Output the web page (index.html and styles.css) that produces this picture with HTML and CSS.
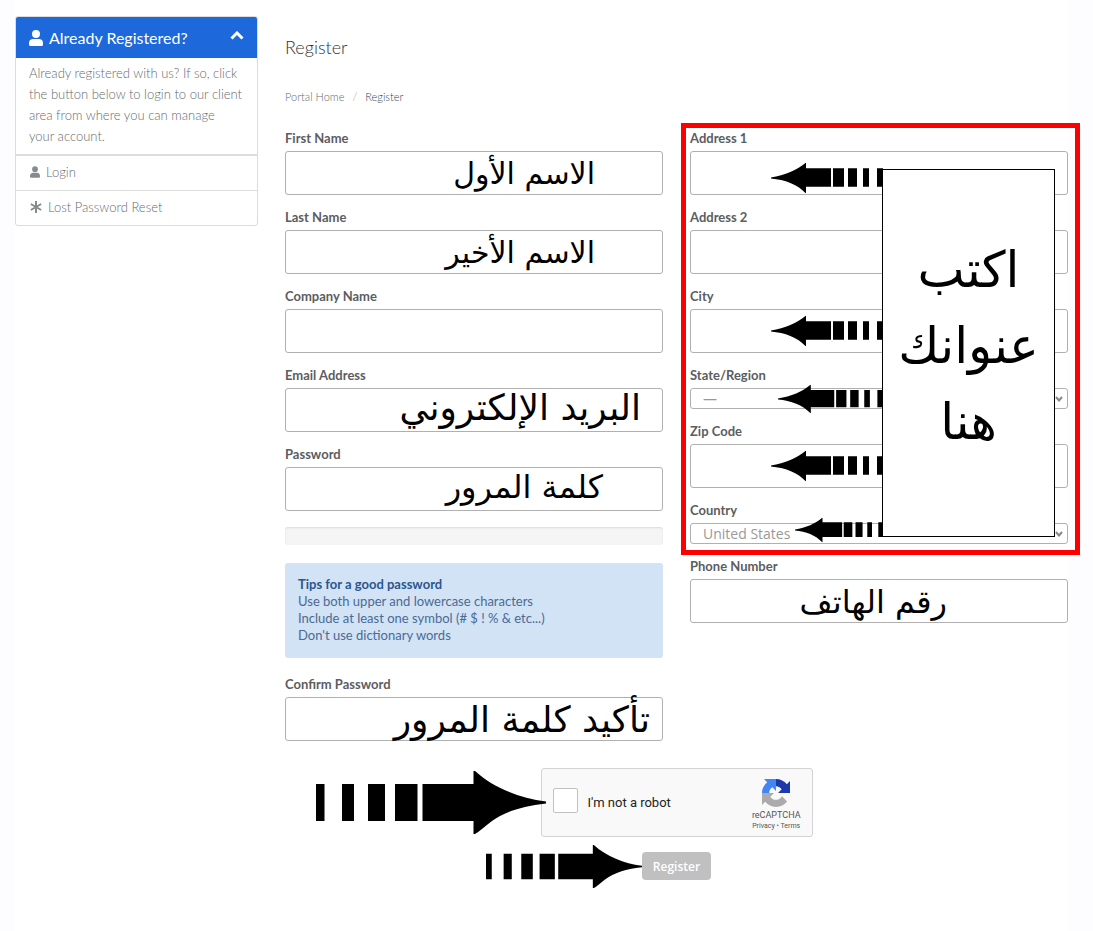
FILE: index.html
```html
<!DOCTYPE html>
<html lang="en">
<head>
    <meta charset="UTF-8">
    <meta name="viewport" content="width=device-width, initial-scale=1.0">
    <title>Register</title>
    <link rel="stylesheet" href="styles.css">
</head>
<body>
    <!-- Shared shapes -->
    <svg class="defs" aria-hidden="true">
        <symbol id="arrow-left" viewBox="0 0 112 32" preserveAspectRatio="none">
            <path d="M0 15.500C14 13 26 8 35 0V6H60V25H35V32C26 22 14 18 0 16.500Z"/>
            <path d="M62 6H73V25H62ZM77 6H86V25H77ZM92 6H98V25H92ZM106 6H112V25H106Z"/>
        </symbol>
        <symbol id="arrow-right" viewBox="0 0 230 63" preserveAspectRatio="none">
            <path d="M0 13H8.500V50H0ZM26 13H38V50H26ZM52 13H69V50H52ZM79 13H101.500V50H79Z"/>
            <path d="M106.500 13H157.500V0H159C178 17 203 27 230 30.500V32.500C205 35 187 42 176 50C168 56 163 61 159 63H157.500V50H106.500Z"/>
        </symbol>
        <symbol id="user" viewBox="0 0 14 16">
            <circle cx="7" cy="4" r="4"/>
            <path d="M3.500 9H10.500Q14 9.500 14 13V14.500Q14 16 12.500 16H1.500Q0 16 0 14.500V13Q0 9.500 3.500 9Z"/>
        </symbol>
    </svg>

    <div class="page">
        <aside class="sidebar">
            <div class="panel">
                <h2 class="panel-heading">
                    <svg class="icon-user"><use href="#user"/></svg>
                    Already Registered?
                    <svg class="icon-chevron" viewBox="0 0 14 9"><path d="M1.500 7.500L7 2L12.500 7.500"/></svg>
                </h2>
                <p class="panel-body">Already registered with us? If so, click the button below to login to our client area from where you can manage<br>your account.</p>
                <a class="panel-link" href="#">
                    <svg class="icon-small"><use href="#user"/></svg>
                    Login
                </a>
                <a class="panel-link" href="#">
                    <svg class="icon-star" viewBox="0 0 12 12"><path d="M6 0V12M.8 3L11.200 9M11.200 3L.8 9"/></svg>
                    Lost Password Reset
                </a>
            </div>
        </aside>

        <main class="main">
            <h1>Register</h1>
            <nav class="breadcrumb">
                <a href="#">Portal Home</a>
                <span class="separator">/</span>
                <span class="current">Register</span>
            </nav>

            <form>
                <div class="columns">
                    <div class="column">
                        <div class="field">
                            <label for="firstname">First Name</label>
                            <div class="control">
                                <input type="text" id="firstname">
                                <span class="hint hint-first" lang="ar" dir="rtl">الاسم الأول</span>
                            </div>
                        </div>
                        <div class="field">
                            <label for="lastname">Last Name</label>
                            <div class="control">
                                <input type="text" id="lastname">
                                <span class="hint hint-last" lang="ar" dir="rtl">الاسم الأخير</span>
                            </div>
                        </div>
                        <div class="field">
                            <label for="company">Company Name</label>
                            <div class="control">
                                <input type="text" id="company">
                            </div>
                        </div>
                        <div class="field">
                            <label for="email">Email Address</label>
                            <div class="control">
                                <input type="email" id="email">
                                <span class="hint hint-email" lang="ar" dir="rtl">البريد الإلكتروني</span>
                            </div>
                        </div>
                        <div class="field">
                            <label for="password">Password</label>
                            <div class="control">
                                <input type="password" id="password">
                                <span class="hint hint-password" lang="ar" dir="rtl">كلمة المرور</span>
                            </div>
                        </div>
                        <div class="strength"></div>
                        <div class="tips">
                            <strong>Tips for a good password</strong><br>
                            Use both upper and lowercase characters<br>
                            Include at least one symbol (# $ ! % &amp; etc...)<br>
                            Don't use dictionary words
                        </div>
                        <div class="field">
                            <label for="confirm">Confirm Password</label>
                            <div class="control">
                                <input type="password" id="confirm">
                                <span class="hint hint-confirm" lang="ar" dir="rtl">تأكيد كلمة المرور</span>
                            </div>
                        </div>
                    </div>

                    <div class="column">
                        <div class="address">
                            <div class="field">
                                <label for="address1">Address 1</label>
                                <div class="control">
                                    <input type="text" id="address1">
                                    <svg class="arrow arrow-low"><use href="#arrow-left"/></svg>
                                </div>
                            </div>
                            <div class="field">
                                <label for="address2">Address 2</label>
                                <div class="control">
                                    <input type="text" id="address2">
                                </div>
                            </div>
                            <div class="field">
                                <label for="city">City</label>
                                <div class="control">
                                    <input type="text" id="city">
                                    <svg class="arrow"><use href="#arrow-left"/></svg>
                                </div>
                            </div>
                            <div class="field">
                                <label for="state">State/Region</label>
                                <div class="control">
                                    <select id="state"><option>—</option></select>
                                    <svg class="chevron" viewBox="0 0 8 6"><path d="M1 1L4 4.500L7 1"/></svg>
                                    <svg class="arrow arrow-medium"><use href="#arrow-left"/></svg>
                                </div>
                            </div>
                            <div class="field">
                                <label for="zip">Zip Code</label>
                                <div class="control">
                                    <input type="text" id="zip">
                                    <svg class="arrow"><use href="#arrow-left"/></svg>
                                </div>
                            </div>
                            <div class="field">
                                <label for="country">Country</label>
                                <div class="control">
                                    <select id="country"><option>United States</option></select>
                                    <svg class="chevron" viewBox="0 0 8 6"><path d="M1 1L4 4.500L7 1"/></svg>
                                    <svg class="arrow arrow-small"><use href="#arrow-left"/></svg>
                                </div>
                            </div>
                            <div class="note" lang="ar" dir="rtl">اكتب<br>عنوانك<br>هنا</div>
                        </div>
                        <div class="field">
                            <label for="phone">Phone Number</label>
                            <div class="control">
                                <input type="tel" id="phone">
                                <span class="hint hint-phone" lang="ar" dir="rtl">رقم الهاتف</span>
                            </div>
                        </div>
                    </div>
                </div>

                <div class="captcha">
                    <input type="checkbox" id="robot">
                    <label for="robot">I'm not a robot</label>
                    <div class="captcha-brand">
                        <svg viewBox="0 0 64 64">
                            <path fill="#1c3aa9" d="M64 32V4.700L56.800 11.800C51 4.700 42 .1 32 .1V16.400C38 16.600 42.500 19.500 45 23.600L36.700 32Z"/>
                            <path fill="#4285f4" d="M32 .1H4.600L11.800 7.300C4.600 13.100 0 22 0 32H16.300C16.500 26.500 19.500 21.700 23.500 19.100L31.900 27.400Z"/>
                            <path fill="#ababab" d="M0 32V59.300L7.200 52.200C13 59.300 22 63.900 32 63.900C42.400 63.900 51.600 59 57.400 51.300L45.700 39.400C44.600 41.600 42.900 43.400 41 44.700C38.900 46.300 36 47.600 32 47.600C26 47.400 21.500 44.400 19 40.300L27.300 32Z"/>
                        </svg>
                        <div class="captcha-name">reCAPTCHA</div>
                        <div class="captcha-links"><a href="#">Privacy</a> • <a href="#">Terms</a></div>
                    </div>
                    <svg class="pointer pointer-large"><use href="#arrow-right"/></svg>
                </div>

                <div class="submit">
                    <button type="submit">Register</button>
                    <svg class="pointer"><use href="#arrow-right"/></svg>
                </div>
            </form>
        </main>
    </div>
</body>
</html>
```

FILE: styles.css
```css
/* General Styles */
* {
    box-sizing: border-box;
}

body {
    margin: 0;
    font-family: Lato, "Open Sans", sans-serif;
    font-size: 13px;
    color: #666c70;
    background: #fdfdff;
}

a {
    color: inherit;
    text-decoration: none;
}

.defs {
    position: absolute;
    width: 0;
    height: 0;
}

.page {
    display: flex;
    gap: 27px;
    min-height: 100vh;
    margin: 0 25px 0 15px;
    padding-top: 16px;
    padding-bottom: 50px;
    background: #fff;
}

/* Sidebar */
.sidebar {
    flex: 0 0 243px;
}

.panel {
    border: 1px solid #dcdcdc;
    border-radius: 3px;
    overflow: hidden;
}

.panel-heading {
    display: flex;
    align-items: center;
    gap: 6px;
    height: 41px;
    margin: 0;
    padding: 0 13px;
    font-size: 16px;
    font-weight: 400;
    color: #fff;
    background: #1d68db;
}

.icon-user {
    width: 14px;
    height: 16px;
    fill: #fff;
}

.icon-chevron {
    width: 14px;
    height: 9px;
    margin-left: auto;
    margin-bottom: 4px;
    fill: none;
    stroke: #fff;
    stroke-width: 3;
}

.panel-body {
    margin: 0;
    padding: 5px 13px 7px;
    line-height: 21px;
    font-weight: 300;
    border-bottom: 1px solid #dcdcdc;
}

.panel-link {
    display: flex;
    align-items: center;
    gap: 6px;
    height: 35px;
    padding: 0 14px 2px;
    font-weight: 300;
    border-top: 1px solid #dcdcdc;
}

.icon-small {
    width: 10px;
    height: 12px;
    fill: #858b8e;
}

.icon-star {
    width: 12px;
    height: 12px;
    stroke: #858b8e;
    stroke-width: 2;
}

/* Main column */
.main {
    flex: 1;
    min-width: 0;
}

h1 {
    margin: 19px 0 0;
    font-size: 18px;
    line-height: 24px;
    font-weight: 300;
    color: #333;
}

.breadcrumb {
    display: flex;
    gap: 8px;
    margin-top: 28px;
    margin-bottom: 21px;
    font-size: 11px;
    line-height: 20px;
    font-weight: 300;
}

.separator {
    color: #999;
}

.current {
    color: #343f58;
}

.columns {
    display: grid;
    grid-template-columns: 1fr 1fr;
    gap: 27px;
}

.field {
    margin-bottom: 12px;
}

.field label {
    display: block;
    margin-bottom: 3px;
    line-height: 20px;
    font-weight: 700;
    color: #5c5d5f;
}

.control {
    position: relative;
}

.control input,
.control select {
    display: block;
    width: 100%;
    height: 44px;
    padding: 0 12px;
    border: 1px solid #b0b0b0;
    border-radius: 3px;
    background: #fff;
    font-family: "Open Sans", sans-serif;
    font-size: 14px;
    color: #999;
}

.control select {
    height: 21px;
    appearance: none;
    line-height: 19px;
}

.chevron {
    position: absolute;
    top: 8px;
    right: 5px;
    width: 8px;
    height: 6px;
    fill: none;
    stroke: #888;
    stroke-width: 2;
}

.strength {
    height: 18px;
    margin: 16px 0 18px;
    background: #f5f5f5;
    border-radius: 3px;
    box-shadow: inset 0 1px 2px rgba(0, 0, 0, 0.1);
}

.tips {
    margin-bottom: 16px;
    padding: 13px 13px 14px;
    line-height: 17px;
    color: #4b6a97;
    background: #d1e3f4;
    border-radius: 3px;
}

.tips strong {
    color: #2c5690;
}

/* Arabic notes written over the form */
.hint,
.note {
    font-family: "DejaVu Sans", sans-serif;
    color: #000;
    white-space: nowrap;
}

.hint {
    position: absolute;
    top: 3px;
    font-size: 32px;
    line-height: 40px;
    pointer-events: none;
}

.hint-first,
.hint-last {
    right: 68px;
    font-size: 30px;
}

.hint-email {
    top: 0;
    right: 22px;
    font-size: 36px;
}

.hint-password {
    top: 0;
    right: 60px;
}

.hint-confirm {
    right: 13px;
    font-size: 36px;
}

.hint-phone {
    right: 121px;
}

.address {
    position: relative;
}

.address::after {
    content: "";
    position: absolute;
    top: -5px;
    right: -12px;
    bottom: -11px;
    left: -9px;
    border: 5px solid #f00;
    pointer-events: none;
}

.note {
    position: absolute;
    top: 41px;
    right: 13px;
    width: 173px;
    height: 368px;
    padding-top: 62px;
    border: 1px solid #000;
    background: #fff;
    font-size: 50px;
    line-height: 76px;
    text-align: center;
}

.arrow {
    position: absolute;
    top: 50%;
    right: 185px;
    width: 112px;
    height: 31px;
    transform: translateY(-50%);
}

.arrow-low {
    top: 62%;
}

.arrow-medium {
    width: 105px;
    height: 29px;
}

.arrow-small {
    top: 35%;
    width: 88px;
    height: 25px;
}

/* Captcha and submit */
.captcha {
    position: relative;
    display: flex;
    align-items: center;
    width: 272px;
    height: 69px;
    margin: 15px auto 0;
    padding: 0 11px;
    border: 1px solid #d3d3d3;
    border-radius: 3px;
    background: #f9f9f9;
    font-family: Roboto, sans-serif;
    color: #222;
}

.captcha input {
    appearance: none;
    width: 25px;
    height: 25px;
    margin: 0 10px 4px 0;
    border: 1px solid #c1c1c1;
    border-radius: 2px;
    background: #fff;
}

.captcha-brand {
    margin-left: auto;
    text-align: center;
    color: #555;
}

.captcha-brand svg {
    display: block;
    width: 28px;
    height: 28px;
    margin: 5px auto 2px;
}

.captcha-name {
    font-size: 9px;
    line-height: 13px;
}

.captcha-links {
    font-size: 7px;
    line-height: 9px;
}

.pointer {
    position: absolute;
    top: -7px;
    right: 100%;
    width: 156px;
    height: 43px;
}

.pointer-large {
    top: 2px;
    right: calc(100% - 4px);
    width: 230px;
    height: 63px;
}

.submit {
    position: relative;
    width: 69px;
    margin: 15px auto 0;
}

.submit button {
    display: block;
    width: 100%;
    height: 28px;
    padding: 0;
    border: 0;
    border-radius: 4px;
    background: #c0c0c0;
    font-family: "Open Sans", sans-serif;
    font-size: 12px;
    font-weight: 600;
    color: #fff;
}
```
